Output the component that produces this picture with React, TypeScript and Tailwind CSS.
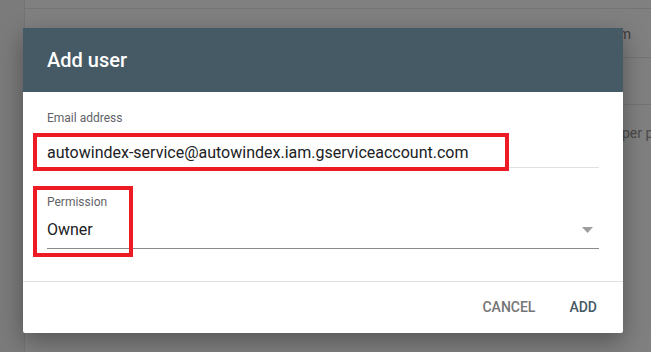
export default function App() {
  return (
    <div className="relative h-[352px] w-[651px] overflow-hidden bg-[#808080] font-['Roboto','Liberation_Sans',sans-serif]">
      {/* dimmed page behind the dialog */}
      <div className="flex h-full">
        <div className="w-[25px] shrink-0 border-r border-[#747474] bg-[#7b7b7b]" />
        <div className="flex min-w-0 flex-1 flex-col overflow-hidden">
          <div className="h-[9px] border-b border-[#747474]" />
          <div className="flex h-[49px] items-center justify-end whitespace-nowrap border-b border-[#747474] pr-[20px] pt-[2px] text-[14px] text-[#3c3c3c]">
            autowindex-service@autowindex.iam.gserviceaccount.com
          </div>
          <div className="h-[47px] border-b border-[#747474]" />
          <div className="flex h-[56px] items-center whitespace-nowrap pl-[597px] text-[14px] text-[#4a4a4a]">
            per page
          </div>
        </div>
      </div>

      {/* dialog */}
      <div className="absolute left-[23px] top-[28px] w-[600px] rounded-[2px] bg-white shadow-[0_8px_24px_rgba(0,0,0,0.35)]">
        <div className="flex h-[64px] items-center bg-[#465a65] px-[24px]">
          <h2 className="text-[20px] font-medium text-white">Add user</h2>
        </div>

        <div className="px-[24px] pt-[18px] pb-[32px]">
          <div className="text-[12px] leading-[16px] text-[#5f6368]">Email address</div>
          <div className="mt-[16px] border-b border-[#e0e0e0] pb-[3px] text-[16px] leading-[22px] text-[#202124]">
            autowindex-service@autowindex.iam.gserviceaccount.com
          </div>

          <div className="mt-[26px] text-[12px] leading-[16px] text-[#5f6368]">Permission</div>
          <div className="mt-[9px] flex items-center justify-between border-b border-[#8a8a8a] pb-[7px]">
            <span className="text-[16px] leading-[22px] text-[#202124]">Owner</span>
            <svg width="11" height="6" viewBox="0 0 11 6" className="mr-[6px]">
              <polygon points="0,0 11,0 5.5,6" fill="#9e9e9e" />
            </svg>
          </div>
        </div>

        <div className="flex h-[52px] items-center justify-end gap-[34px] border-t border-[#e0e0e0] pr-[26px] text-[14px] font-medium">
          <button className="text-[#757575]">CANCEL</button>
          <button className="text-[#455a64]">ADD</button>
        </div>

        {/* red annotation boxes */}
        <div className="absolute left-[10px] top-[105px] h-[38px] w-[476px] border-[4px] border-[#ed1c24]" />
        <div className="absolute left-[10px] top-[158px] h-[71px] w-[100px] border-[4px] border-[#ed1c24]" />
      </div>
    </div>
  );
}
